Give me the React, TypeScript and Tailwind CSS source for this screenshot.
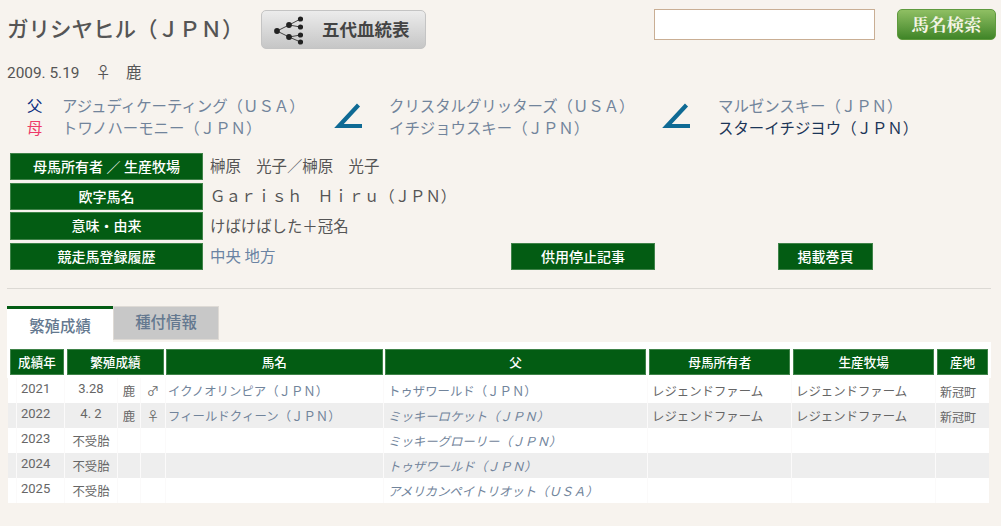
import * as React from "react";

const font = "font-['Roboto','Noto_Sans_CJK_JP',sans-serif]";

const infoLabel =
  "flex h-[27px] items-center justify-center border border-[#3f8349] bg-[#035c13] pt-px text-[14px] font-medium text-white";

const infoValue = "ml-[7px] pt-[3px]";

const Angle = () => (
  <svg width="30" height="30" viewBox="0 0 30 30" className="shrink-0">
    <path d="M24.5 3 L5 24 H28" fill="none" stroke="#0f6a94" strokeWidth="4.2" />
  </svg>
);

const TreeIcon = () => (
  <svg width="30" height="30" viewBox="0 0 30 30" className="shrink-0" fill="#222">
    <path
      d="M4 16 L16 10 L27.5 4 M16 10 L27.5 12 M4 16 L16 22 L27.5 20 M16 22 L27.5 27"
      fill="none"
      stroke="#444"
      strokeWidth="1"
    />
    <circle cx="4" cy="16" r="2.9" />
    <circle cx="16" cy="10" r="2.9" />
    <circle cx="16" cy="22" r="2.9" />
    <circle cx="27.5" cy="4" r="2.6" />
    <circle cx="27.5" cy="12" r="2.6" />
    <circle cx="27.5" cy="20" r="2.6" />
    <circle cx="27.5" cy="27" r="2.6" />
  </svg>
);

const headers = [
  { label: "成績年", width: "w-[54px]", gap: "mr-[3px]" },
  { label: "繁殖成績", width: "w-[97px]", gap: "mr-[2px]" },
  { label: "馬名", width: "w-[217px]", gap: "mr-[2px]" },
  { label: "父", width: "w-[262px]", gap: "mr-[3px]" },
  { label: "母馬所有者", width: "w-[141px]", gap: "mr-[3px]" },
  { label: "生産牧場", width: "w-[141px]", gap: "mr-[3px]" },
  { label: "産地", width: "w-[51px]", gap: "" },
];

const rows = [
  { year: "2021", result: "3.28", color: "鹿", sex: "♂", name: "イクノオリンピア（ＪＰＮ）", sire: "トゥザワールド（ＪＰＮ）", italic: false, owner: "レジェンドファーム", farm: "レジェンドファーム", area: "新冠町" },
  { year: "2022", result: "4. 2", color: "鹿", sex: "♀", name: "フィールドクィーン（ＪＰＮ）", sire: "ミッキーロケット（ＪＰＮ）", italic: true, owner: "レジェンドファーム", farm: "レジェンドファーム", area: "新冠町" },
  { year: "2023", result: "不受胎", color: "", sex: "", name: "", sire: "ミッキーグローリー（ＪＰＮ）", italic: true, owner: "", farm: "", area: "" },
  { year: "2024", result: "不受胎", color: "", sex: "", name: "", sire: "トゥザワールド（ＪＰＮ）", italic: true, owner: "", farm: "", area: "" },
  { year: "2025", result: "不受胎", color: "", sex: "", name: "", sire: "アメリカンペイトリオット（ＵＳＡ）", italic: true, owner: "", farm: "", area: "" },
];

const cell = "flex h-full items-center border-r border-[#fbfafa] pt-[4px]";

export default function App() {
  return (
    <div className={`${font} h-[526px] w-[1001px] overflow-hidden bg-[#f7f3ee] text-[#555]`}>
      {/* header */}
      <div className="flex items-start pl-[7px] pr-[5px] pt-[9px]">
        <div className="mt-[6px] w-[254px] text-[21.5px] font-medium leading-[30px] text-[#555]">
          ガリシヤヒル（ＪＰＮ）
        </div>
        <div className="mt-px flex h-[39px] w-[165px] items-center rounded-[5px] border border-[#c4c4c4] bg-gradient-to-b from-[#ececec] to-[#c6c6c6] pl-[11px]">
          <TreeIcon />
          <span className="ml-[19px] pt-[2px] text-[17.5px] font-bold leading-none text-[#444]">五代血統表</span>
        </div>
        <div className="ml-auto h-[31px] w-[221px] border border-[#c9ae94] bg-white" />
        <div className="ml-[22px] flex h-[31px] w-[99px] items-center justify-center rounded-[5px] border border-[#5f9a3e] bg-gradient-to-b from-[#8fbf63] to-[#3f8527] font-['Noto_Serif_CJK_JP','Liberation_Serif','Noto_Sans_CJK_JP',serif] text-[17.5px] font-bold text-[#f4f4e4]">
          馬名検索
        </div>
      </div>

      {/* birth */}
      <div className="mt-[15px] flex h-5 items-center pl-[7px] text-[15.4px]">
        <span>2009. 5.19</span>
        <span className="ml-[16px]">♀</span>
        <span className="ml-[15px]">鹿</span>
      </div>

      {/* pedigree */}
      <div className="mt-[11px] flex items-center pl-[27px] text-[15.4px] leading-[22px] text-[#71849b]">
        <div className="w-[35px] translate-y-px">
          <div className="text-[#0b2d80]">父</div>
          <div className="text-[#ee3a6a]">母</div>
        </div>
        <div className="w-[272px] translate-y-px">
          <div>アジュディケーティング（ＵＳＡ）</div>
          <div>トワノハーモニー（ＪＰＮ）</div>
        </div>
        <Angle />
        <div className="ml-[25px] w-[273px] translate-y-px">
          <div>クリスタルグリッターズ（ＵＳＡ）</div>
          <div>イチジョウスキー（ＪＰＮ）</div>
        </div>
        <Angle />
        <div className="ml-[26px] translate-y-px">
          <div>マルゼンスキー（ＪＰＮ）</div>
          <div className="text-[#1b3557]">スターイチジヨウ（ＪＰＮ）</div>
        </div>
      </div>

      {/* info */}
      <div className="mt-[14px] flex flex-col gap-[3px] pl-[10px] text-[15.4px]">
        <div className="flex items-center">
          <div className={`${infoLabel} w-[193px]`}>母馬所有者 ／ 生産牧場</div>
          <div className={infoValue}>榊原　光子／榊原　光子</div>
        </div>
        <div className="flex items-center">
          <div className={`${infoLabel} w-[193px]`}>欧字馬名</div>
          <div className={infoValue}>Ｇａｒｉｓｈ　Ｈｉｒｕ（ＪＰＮ）</div>
        </div>
        <div className="-mt-px flex items-center">
          <div className={`${infoLabel} !h-[28px] w-[193px]`}>意味・由来</div>
          <div className={infoValue}>けばけばした＋冠名</div>
        </div>
        <div className="flex items-center">
          <div className={`${infoLabel} w-[193px]`}>競走馬登録履歴</div>
          <div className={`${infoValue} w-[301px] text-[#6a83a3]`}>中央 地方</div>
          <div className={`${infoLabel} w-[144px]`}>供用停止記事</div>
          <div className={`${infoLabel} ml-[123px] w-[95px]`}>掲載巻頁</div>
        </div>
      </div>

      <div className="ml-[7px] mt-[18px] h-0 w-[984px] border-t border-[#dcd9d4]" />

      {/* tabs */}
      <div className="ml-[7px] mt-[17px] flex items-start">
        <div className="flex h-[36px] w-[106px] items-center justify-center border-t-[3px] border-[#035c13] bg-white pt-[4px] text-[15.4px] font-medium text-[#64788f]">
          繁殖成績
        </div>
        <div className="flex h-[34px] w-[106px] items-center justify-center border border-[#dedad5] bg-[#c8c8c8] pt-px text-[15.4px] font-medium text-[#64788f]">
          種付情報
        </div>
      </div>

      {/* table */}
      <div className="ml-[7px] w-[984px] bg-white px-[3px] pb-[3px] pt-[7px]">
        <div className="flex">
          {headers.map((h) => (
            <div
              key={h.label}
              className={`flex h-[26px] items-center justify-center border border-[#3f8349] bg-[#035c13] pt-[3px] text-[12.6px] font-medium text-white ${h.width} ${h.gap}`}
            >
              {h.label}
            </div>
          ))}
        </div>
      </div>
      <div className="ml-[8px] w-[981px] text-[12.4px] text-[#666]">
        {rows.map((r, i) => (
          <div
            key={r.year}
            className={`flex h-[25px] ${i % 2 === 1 ? "bg-[#eeeeee]" : "bg-white"}`}
          >
            <div className={`${cell} w-[9px]`} />
            <div className={`${cell} w-[48px] !pt-0 pb-[4px] pl-[4px] text-[13px]`}>{r.year}</div>
            <div className={`${cell} w-[53px] justify-center ${/\d/.test(r.result) ? "!pt-0 pb-[4px] text-[13px]" : ""}`}>
              {r.result}
            </div>
            <div className={`${cell} w-[23px] justify-center`}>{r.color}</div>
            <div className={`${cell} w-[25px] justify-center`}>{r.sex}</div>
            <div className={`${cell} w-[218px] pl-[2px] text-[#71849b]`}>{r.name}</div>
            <div className={`${cell} w-[264px] pl-[4px] text-[#71849b] ${r.italic ? "italic" : ""}`}>{r.sire}</div>
            <div className={`${cell} w-[144px] pl-[4px]`}>{r.owner}</div>
            <div className={`${cell} w-[144px] pl-[4px]`}>{r.farm}</div>
            <div className="flex h-full w-[53px] items-center pl-[4px] pt-[4px] text-xs">{r.area}</div>
          </div>
        ))}
      </div>
    </div>
  );
}
